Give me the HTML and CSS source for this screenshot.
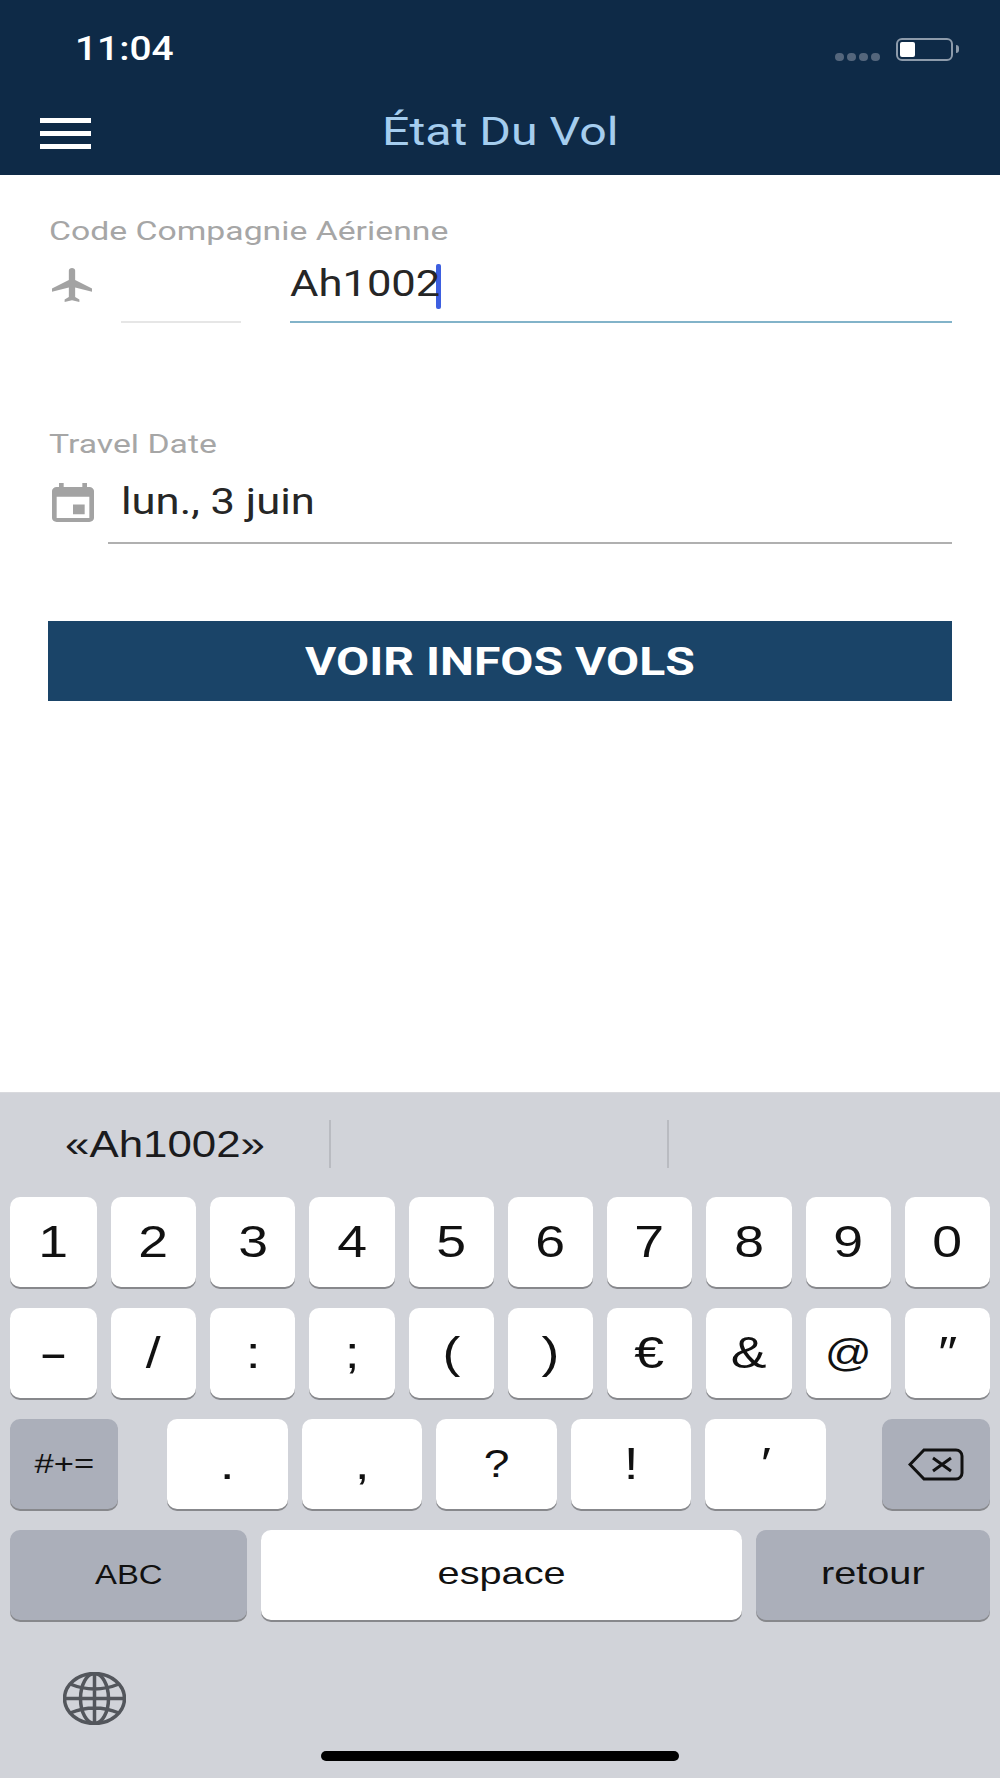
FILE: index.html
```html
<!DOCTYPE html>
<html lang="fr">
<head>
<meta charset="utf-8">
<title>État Du Vol</title>
<link rel="stylesheet" href="styles.css">
</head>
<body>
<div class="screen">
  <header class="header">
    <div class="status">
      <span class="wide time">11:04</span>
      <div class="status-right">
        <div class="dots"><i></i><i></i><i></i><i></i></div>
        <div class="battery"><b></b></div>
        <div class="nub"></div>
      </div>
    </div>
    <div class="nav">
      <div class="burger"><i></i><i></i><i></i></div>
      <div class="title"><span class="wide title-text">État Du Vol</span></div>
    </div>
  </header>

  <main class="form">
    <div class="label label-one"><span class="wide label-text">Code Compagnie Aérienne</span></div>
    <div class="field-row">
      <svg class="icon plane" viewBox="2 2 19 20" preserveAspectRatio="none"><path d="M21 16v-2l-8-5V3.500c0-.83-.67-1.500-1.500-1.500S10 2.670 10 3.500V9l-8 5v2l8-2.500V19l-2 1.500V22l3.500-1 3.500 1v-1.500L13 19v-5.500l8 2.500z"/></svg>
      <div class="prefix"></div>
      <div class="code"><span class="wide value">Ah1002</span><span class="caret"></span></div>
    </div>
    <div class="label label-two"><span class="wide label-text">Travel Date</span></div>
    <div class="date-row">
      <svg class="icon calendar" viewBox="3 1 18 20" preserveAspectRatio="none"><path d="M17 12h-5v5h5v-5zM16 1v2H8V1H6v2H5c-1.110 0-1.990.9-1.990 2L3 19c0 1.100.89 2 2 2h14c1.100 0 2-.9 2-2V5c0-1.100-.9-2-2-2h-1V1h-2zm3 18H5V8h14v11z"/></svg>
      <div class="date"><span class="wide value">lun., 3 juin</span></div>
    </div>
    <div class="button"><span class="wide button-text">VOIR INFOS VOLS</span></div>
  </main>

  <section class="keyboard">
    <div class="suggestions">
      <div class="suggestion"><span class="wide sug-text">«Ah1002»</span></div>
      <div class="suggestion mid"></div>
      <div class="suggestion"></div>
    </div>
    <div class="keys">
      <div class="row wide-first">
        <div class="key"><span>1</span></div><div class="key"><span>2</span></div><div class="key"><span>3</span></div><div class="key"><span>4</span></div><div class="key"><span>5</span></div><div class="key"><span>6</span></div><div class="key"><span>7</span></div><div class="key"><span>8</span></div><div class="key"><span>9</span></div><div class="key"><span>0</span></div>
      </div>
      <div class="row wide-first">
        <div class="key"><span class="dash">-</span></div><div class="key"><span>/</span></div><div class="key"><span>:</span></div><div class="key"><span>;</span></div><div class="key"><span>(</span></div><div class="key"><span>)</span></div><div class="key"><span>€</span></div><div class="key"><span>&amp;</span></div><div class="key"><span class="sym">@</span></div><div class="key"><span>″</span></div>
      </div>
      <div class="row">
        <div class="key dark side"><span class="small">#+=</span></div>
        <div class="punct">
          <div class="key"><span>.</span></div><div class="key"><span>,</span></div><div class="key"><span class="sym">?</span></div><div class="key"><span>!</span></div><div class="key"><span>′</span></div>
        </div>
        <div class="key dark side">
          <svg class="del" viewBox="0 0 56 33"><path d="M16 2H48a6 6 0 0 1 6 6V25a6 6 0 0 1-6 6H16L2 16.500Z"/><path d="M25 10L43 23M43 10L25 23"/></svg>
        </div>
      </div>
      <div class="row">
        <div class="key dark abc"><span class="abc-text">ABC</span></div>
        <div class="key space"><span class="word">espace</span></div>
        <div class="key dark ret"><span class="word">retour</span></div>
      </div>
    </div>
    <div class="bottom">
      <svg class="globe" viewBox="0 0 63 53" preserveAspectRatio="none">
        <ellipse cx="31.500" cy="26.500" rx="30" ry="25"/>
        <ellipse cx="31.500" cy="26.500" rx="14" ry="25"/>
        <path d="M31.500 1.500V51.500M1.500 26.500H61.500M7 12Q31.500 22 56 12M7 41Q31.500 31 56 41"/>
      </svg>
    </div>
    <div class="home"></div>
  </section>
</div>
</body>
</html>
```
FILE: styles.css
```css
* { box-sizing: border-box; }
html, body { margin: 0; padding: 0; background: #fff; }
.screen { width: 1000px; height: 1778px; display: flex; flex-direction: column; font-family: Roboto, "Liberation Sans", sans-serif; overflow: hidden; }
.wide { display: inline-block; transform-origin: left center; white-space: nowrap; }

.header { height: 175px; background: #0e2a47; }
.status { height: 98px; display: flex; justify-content: space-between; align-items: center; padding: 0 41px 0 75px; }
.time { font-weight: 500; font-size: 33px; line-height: 36px; color: #fff; transform: scaleX(1.178); }
.status-right { display: flex; align-items: center; height: 24px; }
.dots { display: flex; gap: 3px; align-self: flex-end; margin-right: 16px; }
.dots i { width: 9px; height: 8px; border-radius: 4px; background: #54667c; }
.battery { width: 57px; height: 23px; border: 2px solid #8d9bab; border-radius: 6px; padding: 2px; }
.battery b { display: block; width: 15px; height: 15px; background: #fff; border-radius: 2px; }
.nub { width: 3px; height: 8px; margin-left: 3px; background: #8d9bab; border-radius: 0 3px 3px 0; }

.nav { display: flex; align-items: center; height: 77px; padding: 0 0 6px 40px; }
.burger { width: 51px; display: flex; flex-direction: column; gap: 8.500px; }
.burger i { height: 4.500px; background: #fff; }
.title { width: 868px; padding: 0 0 4px 291px; }
.title-text { font-size: 39px; line-height: 46px; color: #a5cdee; transform: scaleX(1.238); }

.form { flex: 1; padding: 0 48px; }
.label { color: #a6a6a6; padding-left: 1px; height: 30px; }
.label-one { margin-top: 42px; }
.label-two { margin-top: 107px; }
.label-text { font-size: 25px; line-height: 30px; transform: scaleX(1.350); }
.value { font-size: 36px; line-height: 42px; color: #262626; transform: scaleX(1.210); }
.field-row { display: flex; height: 77px; margin-top: -1px; }
.icon { fill: #a3a3a3; flex: none; }
.plane { width: 40px; height: 34px; margin: 22px 0 0 4px; }
.prefix { width: 120px; height: 77px; margin-left: 29px; border-bottom: 2px solid #e6e6e6; }
.code { display: flex; align-items: flex-start; width: 662px; height: 77px; margin-left: 49px; border-bottom: 2px solid #82b3c9; padding-top: 17px; }
.code .value { width: 146px; }
.caret { width: 5px; height: 45px; margin-top: 1px; background: #3d5fe0; border-radius: 2px; }
.date-row { display: flex; margin-top: 16px; }
.calendar { width: 42px; height: 39px; margin: 7px 0 0 4px; }
.date { width: 844px; height: 68px; margin-left: 14px; border-bottom: 2px solid #b0b0b0; padding: 5px 0 0 13px; }
.button { height: 80px; margin-top: 77px; background: #1a4468; color: #fff; display: flex; align-items: center; padding: 2px 0 0 257px; }
.button-text { font-size: 39px; font-weight: 700; line-height: 46px; transform: scaleX(1.232); }

.keyboard { height: 686px; background: #d1d3d9; border-top: 1px solid #d9dade; font-family: "Liberation Sans", sans-serif; }
.suggestions { display: flex; height: 104px; padding-top: 27px; }
.suggestion { height: 48px; width: 329px; padding-left: 65px; }
.suggestion.mid { width: 340px; border-left: 2px solid #b9bbc1; border-right: 2px solid #b9bbc1; }
.sug-text { font-size: 36px; line-height: 50px; color: #1b1b1d; transform: scaleX(1.218); }

.keys { display: flex; flex-direction: column; gap: 21px; padding: 0 10px; }
.row { display: flex; gap: 14px; height: 90px; }
.wide-first .key:first-child { flex: 0 0 87px; }
.key { flex: 1; height: 90px; background: #fff; border-radius: 10px; box-shadow: 0 2px 0 #87888c; display: flex; align-items: center; justify-content: center; color: #111; }
.key span { display: inline-block; font-size: 44px; line-height: 50px; transform: scaleX(1.218); }
.key span.dash { transform: scaleX(2); }
.key span.sym { font-size: 38px; }
.dark { background: #abafba; }
.side { flex: none; width: 108px; }
.punct { flex: 1; display: flex; gap: 14px; margin: 0 42px 0 35px; }
.key span.small { font-size: 27px; transform: scaleX(1.280); }
.key span.abc-text { font-size: 27px; }
.key span.word { font-size: 32px; margin-bottom: 4px; transform: scaleX(1.240); }
.abc { flex: none; width: 237px; }
.ret { flex: none; width: 234px; }
.space { flex: 1; }
.del { width: 56px; height: 33px; fill: none; stroke: #111; stroke-width: 3; }

.bottom { padding: 52px 0 0 63px; }
.globe { display: block; width: 63px; height: 53px; fill: none; stroke: #53565c; stroke-width: 3.500; }
.home { width: 358px; height: 10px; margin: 26px 0 0 321px; background: #000; border-radius: 5px; }
```
